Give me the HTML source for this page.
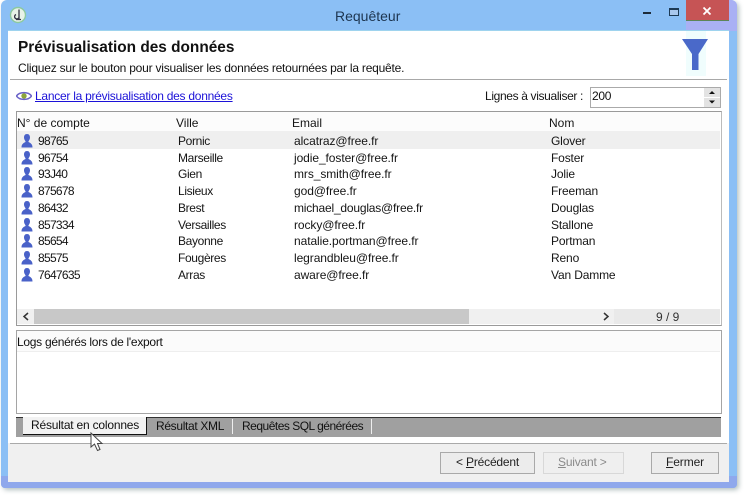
<!DOCTYPE html>
<html lang="fr"><head><meta charset="utf-8"><title>Requêteur</title>
<style>
html,body{margin:0;padding:0;background:#fff}
#p{position:relative;width:750px;height:501px;overflow:hidden;background:#fff;font-family:"Liberation Sans",sans-serif;font-size:12px;color:#151515}
#p div,#p span.a,#p a,#p svg{position:absolute}
.t{white-space:nowrap;line-height:14px}
.n{letter-spacing:-.7px;left:38px}
.c{letter-spacing:-.35px;left:178px}
.e{letter-spacing:-.08px;left:294px}
.o{letter-spacing:-.15px;left:551px}
</style></head><body><div id="p">
<div style="left:1px;top:0;width:736px;height:488px;background:#8bbff5;border-radius:6px 6px 4px 4px;box-shadow:2px 2px 5px rgba(90,120,120,.45)"></div>
<div style="left:1px;top:476px;width:736px;height:12px;background:#8fa8ec;border-radius:0 0 4px 4px"></div>
<div style="left:686px;top:0;width:51px;height:31px;background:#a9b0f4;border-radius:0 6px 0 0"></div>
<div style="left:8px;top:31px;width:721px;height:451px;background:#fff"></div>
<div style="left:8px;top:443px;width:721px;height:39px;background:#f0f0f0"></div>
<div style="left:8px;top:30px;width:721px;height:1px;background:#9ed3ee"></div>

<svg style="left:9px;top:6px" width="18" height="18" viewBox="0 0 18 18"><circle cx="9" cy="9" r="7.500" fill="#e8f2e8" stroke="#8cc9a0" stroke-width="1.400"/><path d="M10 3.500V13M7 8.500a2.300 2.300 0 1 0 3 3M7 13.500h5" fill="none" stroke="#334" stroke-width="1.300"/></svg>
<div class="t" style="left:335px;top:8px;font-size:14px;color:#1d3550;line-height:16px">Requêteur</div>
<div style="left:643px;top:12px;width:8px;height:2px;background:#1d2b3a"></div>
<div style="left:669px;top:8px;width:8px;height:5px;border:1.500px solid #1d3a55;border-top-width:2px;background:#a9c8ee"></div>
<div style="left:686px;top:0;width:43px;height:20px;background:#c65455;border-bottom:1px solid #5d8458"></div>
<svg style="left:702px;top:6px" width="10" height="10" viewBox="0 0 10 10"><path d="M1.500 1.500l7 7M8.500 1.500l-7 7" stroke="#fff" stroke-width="1.800"/></svg>

<div class="t" style="left:18px;top:39px;font-size:15.400px;font-weight:bold;color:#111;line-height:18px">Prévisualisation des données</div>
<div class="t" style="left:18px;top:61px;font-size:12px;color:#111;letter-spacing:-.22px">Cliquez sur le bouton pour visualiser les données retournées par la requête.</div>
<div style="left:686px;top:31px;width:20px;height:45px;background:#f0fdfd"></div>
<svg style="left:681px;top:39px" width="28" height="32" viewBox="0 0 28 32"><path d="M1 0H27L17.500 15V31H11V15Z" fill="#4a69c9"/></svg>
<div style="left:10px;top:79px;width:717px;height:1px;background:#a8a8a8"></div>

<svg style="left:16px;top:89px" width="16" height="14" viewBox="0 0 16 14"><path d="M.5 7C3.500 2.500 12.500 2.500 15.500 7 12.500 11.500 3.500 11.500.5 7Z" fill="#fff" stroke="#6a62c8" stroke-width="1.500"/><circle cx="8" cy="7" r="2.700" fill="#8da53c"/></svg>
<a class="t" style="left:35px;top:89px;color:#1c12d8;text-decoration:underline;letter-spacing:-.26px">Lancer la prévisualisation des données</a>
<div class="t" style="left:485px;top:89px;letter-spacing:-.35px">Lignes à visualiser :</div>
<div style="left:590px;top:87px;width:129px;height:19px;border:1px solid #aaa;background:#fff"></div>
<div class="t" style="left:592px;top:89px;color:#111;letter-spacing:-.3px">200</div>
<div style="left:704px;top:88px;width:16px;height:9px;background:#e3e3e3"></div>
<div style="left:704px;top:98px;width:16px;height:9px;background:#e3e3e3"></div>
<svg style="left:704px;top:88px" width="16" height="19" viewBox="0 0 16 19"><path d="M5 6l3-3 3 3ZM5 12.500l3 3 3-3Z" fill="#111"/></svg>

<div style="left:16px;top:111px;width:704px;height:213px;border:1px solid #9a9a9a;border-right-color:#bbb;background:#fff"></div>
<div style="left:17px;top:112px;width:703px;height:19px;background:#fcfcfc"></div>
<div class="t" style="left:17px;top:116px">N° de compte</div>
<div class="t" style="left:176px;top:116px">Ville</div>
<div class="t" style="left:292px;top:116px">Email</div>
<div class="t" style="left:549px;top:116px">Nom</div>
<div style="left:17px;top:131px;width:703px;height:18px;background:#efefef"></div>

<div class="t n" style="top:134px">98765</div><div class="t c" style="top:134px">Pornic</div><div class="t e" style="top:134px">alcatraz@free.fr</div><div class="t o" style="top:134px">Glover</div>
<div class="t n" style="top:151px">96754</div><div class="t c" style="top:151px">Marseille</div><div class="t e" style="top:151px">jodie_foster@free.fr</div><div class="t o" style="top:151px">Foster</div>
<div class="t n" style="top:167px">93J40</div><div class="t c" style="top:167px">Gien</div><div class="t e" style="top:167px">mrs_smith@free.fr</div><div class="t o" style="top:167px">Jolie</div>
<div class="t n" style="top:184px">875678</div><div class="t c" style="top:184px">Lisieux</div><div class="t e" style="top:184px">god@free.fr</div><div class="t o" style="top:184px">Freeman</div>
<div class="t n" style="top:201px">86432</div><div class="t c" style="top:201px">Brest</div><div class="t e" style="top:201px;letter-spacing:-.2px">michael_douglas@free.fr</div><div class="t o" style="top:201px">Douglas</div>
<div class="t n" style="top:218px">857334</div><div class="t c" style="top:218px">Versailles</div><div class="t e" style="top:218px">rocky@free.fr</div><div class="t o" style="top:218px">Stallone</div>
<div class="t n" style="top:234px">85654</div><div class="t c" style="top:234px">Bayonne</div><div class="t e" style="top:234px">natalie.portman@free.fr</div><div class="t o" style="top:234px">Portman</div>
<div class="t n" style="top:251px">85575</div><div class="t c" style="top:251px">Fougères</div><div class="t e" style="top:251px">legrandbleu@free.fr</div><div class="t o" style="top:251px">Reno</div>
<div class="t n" style="top:268px">7647635</div><div class="t c" style="top:268px">Arras</div><div class="t e" style="top:268px">aware@free.fr</div><div class="t o" style="top:268px">Van Damme</div>

<svg style="left:20px;top:133px" width="14" height="155" viewBox="0 0 14 155"><defs><path id="u" d="M7 0C9.200 0 10 1.800 10 3.500 10 5.300 9 6.500 8.500 7.200V8C10.500 9 12.500 10 12.500 13.500H1.500C1.500 10 3.500 9 5.500 8V7.200C5 6.500 4 5.300 4 3.500 4 1.800 4.800 0 7 0Z" fill="#4a62c8"/></defs><use href="#u" y="1"/><use href="#u" y="18"/><use href="#u" y="34"/><use href="#u" y="51"/><use href="#u" y="68"/><use href="#u" y="85"/><use href="#u" y="101"/><use href="#u" y="118"/><use href="#u" y="135"/></svg>

<div style="left:17px;top:309px;width:703px;height:15px;background:#f0f0f0"></div>
<div style="left:34px;top:309px;width:435px;height:15px;background:#c8c8c8"></div>
<svg style="left:22px;top:312px" width="8" height="9" viewBox="0 0 8 9"><path d="M6 1L2 4.500 6 8" fill="none" stroke="#333" stroke-width="1.500"/></svg>
<svg style="left:602px;top:312px" width="8" height="9" viewBox="0 0 8 9"><path d="M2 1L6 4.500 2 8" fill="none" stroke="#333" stroke-width="1.500"/></svg>
<div style="left:614px;top:309px;width:106px;height:15px;background:#e9e9e9"></div>
<div class="t" style="left:656px;top:310px;color:#333">9 / 9</div>

<div style="left:16px;top:330px;width:704px;height:82px;border:1px solid #a5a5a5;background:#fff"></div>
<div style="left:17px;top:331px;width:703px;height:20px;background:#fbfbfb;border-bottom:1px solid #eee"></div>
<div class="t" style="left:17px;top:335px;color:#111;letter-spacing:-.28px">Logs générés lors de l'export</div>

<div style="left:16px;top:417px;width:705px;height:20px;background:#a0a0a0;border-top:1.500px solid #333;box-sizing:border-box"></div>
<div style="left:23px;top:417px;width:124px;height:18px;background:#f2f2f2;border-right:1px solid #111;border-bottom:1.500px solid #111;box-sizing:border-box"></div>
<div class="t" style="left:31px;top:418px;color:#111;letter-spacing:-.2px">Résultat en colonnes</div>
<div class="t" style="left:156px;top:419px;color:#111;letter-spacing:-.33px">Résultat XML</div>
<div style="left:232px;top:419px;width:1px;height:15px;background:#eee"></div>
<div class="t" style="left:242px;top:419px;color:#111;letter-spacing:-.5px">Requêtes SQL générées</div>
<div style="left:371px;top:419px;width:1px;height:15px;background:#eee"></div>

<div style="left:10px;top:443px;width:717px;height:1px;background:#aaa"></div>
<svg style="left:90px;top:432px" width="15" height="21" viewBox="0 0 15 21"><path d="M1 1V15L4.500 12 7.500 18.500 10 17.500 7.500 11.500H12Z" fill="#fff" stroke="#444" stroke-width="1"/></svg>

<div style="left:440px;top:452px;width:93px;height:20px;background:#ececec;border:1px solid #a9a9a9"></div>
<div class="t" style="left:456px;top:455px;color:#222;letter-spacing:-.18px">&lt; <u>P</u>récédent</div>
<div style="left:543px;top:452px;width:79px;height:20px;background:#efefef;border:1px solid #d8d8d8"></div>
<div class="t" style="left:558px;top:455px;color:#8a8a8a;letter-spacing:-.2px"><u>S</u>uivant &gt;</div>
<div style="left:651px;top:452px;width:66px;height:20px;background:#ececec;border:1px solid #a9a9a9"></div>
<div class="t" style="left:666px;top:455px;color:#222;letter-spacing:-.1px"><u>F</u>ermer</div>
</div></body></html>
